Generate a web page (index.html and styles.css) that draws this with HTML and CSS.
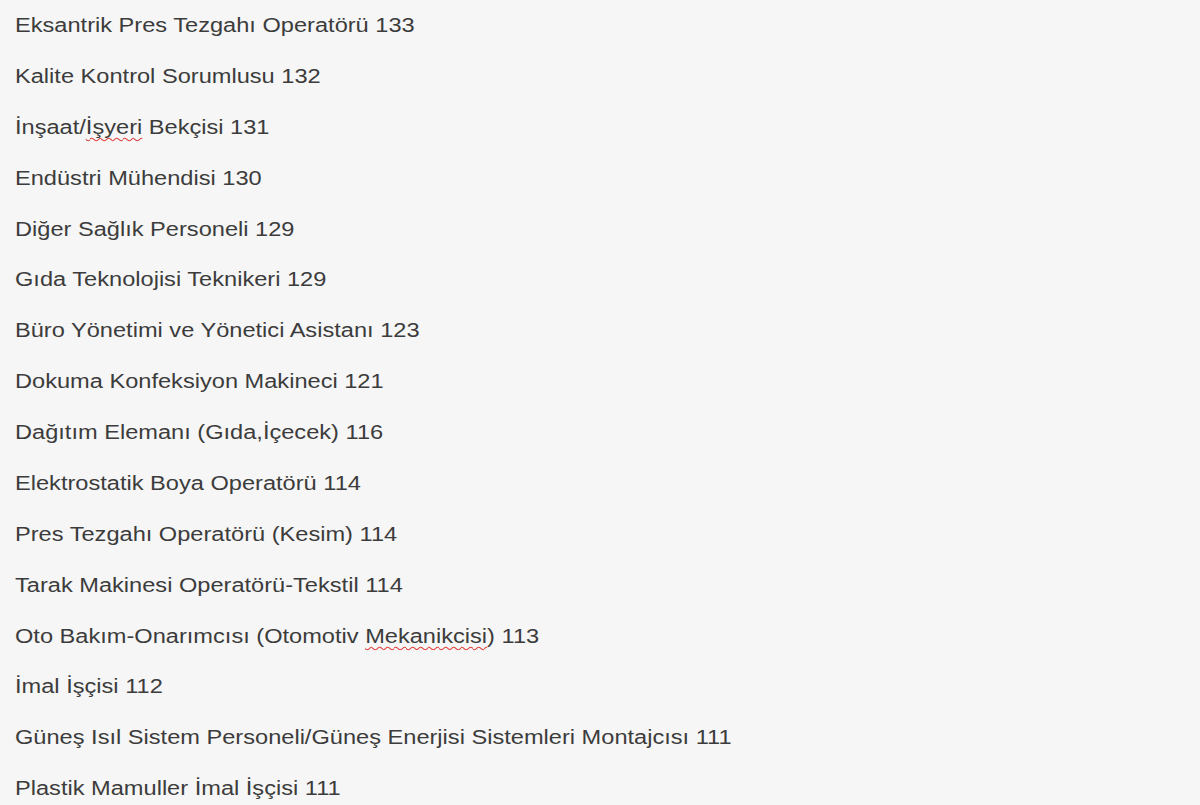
FILE: index.html
```html
<!DOCTYPE html>
<html lang="tr">
<head>
<meta charset="utf-8">
<title>Meslekler</title>
<link rel="stylesheet" href="styles.css">
</head>
<body>
<div class="list">
  <p class="item">Eksantrik Pres Tezgahı Operatörü 133</p>
  <p class="item">Kalite Kontrol Sorumlusu 132</p>
  <p class="item">İnşaat/<span class="typo">İşyeri</span> Bekçisi 131</p>
  <p class="item">Endüstri Mühendisi 130</p>
  <p class="item">Diğer Sağlık Personeli 129</p>
  <p class="item">Gıda Teknolojisi Teknikeri 129</p>
  <p class="item">Büro Yönetimi ve Yönetici Asistanı 123</p>
  <p class="item">Dokuma Konfeksiyon Makineci 121</p>
  <p class="item">Dağıtım Elemanı (Gıda,İçecek) 116</p>
  <p class="item">Elektrostatik Boya Operatörü 114</p>
  <p class="item">Pres Tezgahı Operatörü (Kesim) 114</p>
  <p class="item">Tarak Makinesi Operatörü-Tekstil 114</p>
  <p class="item">Oto Bakım-Onarımcısı (Otomotiv <span class="typo">Mekanikcisi</span>) 113</p>
  <p class="item">İmal İşçisi 112</p>
  <p class="item">Güneş Isıl Sistem Personeli/Güneş Enerjisi Sistemleri Montajcısı 111</p>
  <p class="item">Plastik Mamuller İmal İşçisi 111</p>
</div>
</body>
</html>
```

FILE: styles.css
```css
html, body {
  margin: 0;
  padding: 0;
  background: #f6f6f6;
}
body {
  font-family: "Liberation Sans", Arial, sans-serif;
  color: #3c3c3c;
  overflow: hidden;
  height: 805px;
}
.list {
  display: flex;
  flex-direction: column;
  align-items: flex-start;
  gap: 26.87px;
  padding: 13.2px 0 0 15px;
}
.item {
  margin: 0;
  font-size: 20px;
  line-height: 24px;
  white-space: nowrap;
  width: fit-content;
  transform: scaleX(1.18);
  transform-origin: 0 50%;
}
.typo {
  text-decoration: underline wavy #e0403c;
  text-decoration-thickness: 1px;
  text-underline-offset: 3px;
  text-decoration-skip-ink: none;
}
```
